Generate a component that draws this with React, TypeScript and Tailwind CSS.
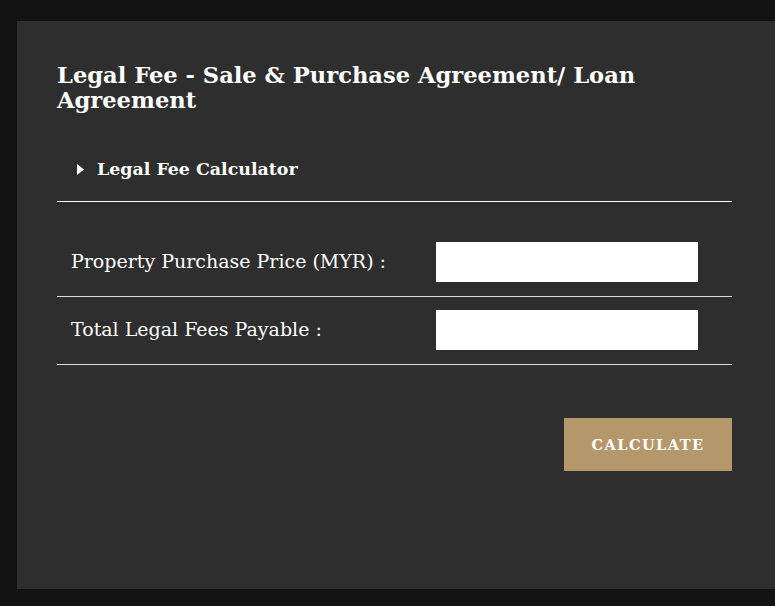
export default function App() {
  return (
    <div className="min-h-screen bg-[#131313] pt-[21px] pl-[17px] pb-[17px] overflow-hidden">
      <div className="h-[568px] bg-[#2e2e2e] pl-[40px] pt-[42px] font-['DejaVu_Serif',serif] text-white">
        <div className="w-[675px]">
          <h1 className="text-[22.6px] leading-[25px] font-bold">
            Legal Fee - Sale &amp; Purchase Agreement/ Loan Agreement
          </h1>

          {/* Calculator toggle */}
          <div className="mt-[45px] flex items-center pl-[20px] pb-[21px] border-b border-white">
            <svg width="7" height="11" viewBox="0 0 7 11" className="mr-[13px]">
              <path d="M0 0 L7 5.5 L0 11 Z" fill="#ffffff" />
            </svg>
            <span className="text-[17.4px] font-bold leading-[22px]">Legal Fee Calculator</span>
          </div>

          <div className="mt-[27px]">
            {[
              'Property Purchase Price (MYR) :',
              'Total Legal Fees Payable :',
            ].map((label) => (
              <div key={label} className="flex items-center border-b border-[#dcdcdc] pt-[13px] pb-[14px]">
                <div className="w-[379px] pl-[14px] text-[19px] leading-[22px] pb-[3px]">{label}</div>
                <input type="text" className="w-[262px] h-[40px] bg-white border-0 outline-none" />
              </div>
            ))}
          </div>

          <div className="flex justify-end mt-[53px]">
            <button className="w-[168px] h-[53px] bg-[#b4986c] text-white text-[14.5px] font-bold tracking-[1.5px]">
              CALCULATE
            </button>
          </div>
        </div>
      </div>
    </div>
  );
}
